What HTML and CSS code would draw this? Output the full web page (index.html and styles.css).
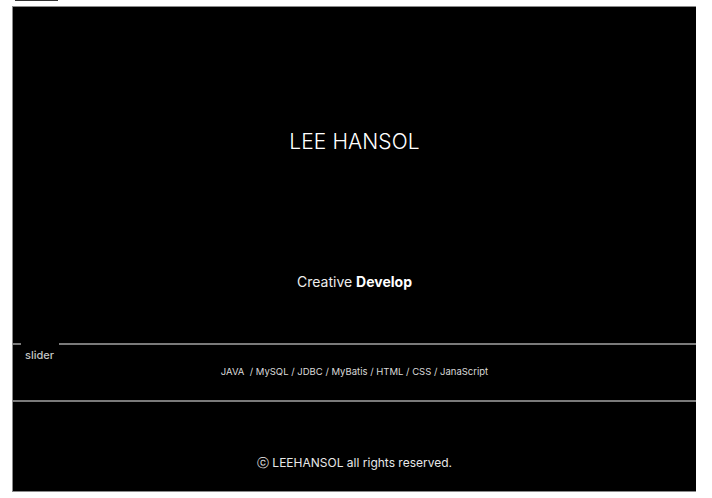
FILE: index.html
```html
<!DOCTYPE html>
<html lang="ko">
<head>
<meta charset="utf-8">
<title>LEE HANSOL</title>
<link rel="stylesheet" href="styles.css">
</head>
<body>
<div class="topbar"></div>
<div class="page">
  <header class="intro">
    <h1 class="name">LEE HANSOL</h1>
  </header>
  <section class="hero">
    <p class="tagline">Creative <strong>Develop</strong></p>
  </section>
  <section class="slider">
    <div class="rule"><span class="seg-short"></span><span class="seg-gap"></span><span class="seg-long"></span></div>
    <div class="slider-label">slider</div>
    <p class="skills">JAVA &nbsp;/ MySQL / JDBC / MyBatis / HTML / CSS / JanaScript</p>
  </section>
  <footer class="footer">
    <p class="copy">ⓒ LEEHANSOL all rights reserved.</p>
  </footer>
</div>
</body>
</html>
```

FILE: styles.css
```css
html, body {
  margin: 0;
  padding: 0;
  background: #fff;
}
body {
  font-family: Inter, "Noto Sans", sans-serif;
  color: #fff;
}
.topbar {
  width: 43px;
  height: 1px;
  margin-left: 15px;
  background: #333;
}
.page {
  margin: 5px 0 0 12px;
  width: 684px;
  height: 486px;
  box-sizing: border-box;
  background: #000;
  border-top: 1px solid #8a8a8a;
  border-left: 1px solid #8a8a8a;
  border-bottom: 1px solid #8a8a8a;
  display: flex;
  flex-direction: column;
}
.intro {
  height: 145px;
  display: flex;
  align-items: flex-end;
  justify-content: center;
}
.name {
  margin: 0;
  font-size: 21px;
  font-weight: 300;
  letter-spacing: 0.1px;
  line-height: 1;
}
.hero {
  height: 191px;
  box-sizing: border-box;
  padding-top: 121px;
  display: flex;
  align-items: flex-start;
  justify-content: center;
}
.tagline {
  margin: 0;
  font-size: 14px;
  font-weight: 400;
  color: #eee;
}
.tagline strong {
  font-weight: 700;
  color: #fff;
}
.slider {
  height: 57px;
  border-bottom: 2px solid #7a7a7a;
}
.rule {
  display: flex;
  height: 2px;
}
.seg-short {
  width: 8px;
  background: #7a7a7a;
}
.seg-gap {
  width: 38px;
}
.seg-long {
  flex: 1;
  background: #7a7a7a;
}
.slider-label {
  padding-left: 12px;
  margin-top: 4px;
  font-size: 11px;
  font-weight: 500;
  color: #c4c4c4;
  line-height: 12px;
}
.skills {
  margin: 5px 0 0;
  text-align: center;
  font-size: 9.5px;
  color: #dadada;
}
.footer {
  flex: 1;
  display: flex;
  align-items: flex-end;
  justify-content: center;
  padding-bottom: 19px;
}
.copy {
  margin: 0;
  font-size: 12px;
  color: #e8e8e8;
}
```
